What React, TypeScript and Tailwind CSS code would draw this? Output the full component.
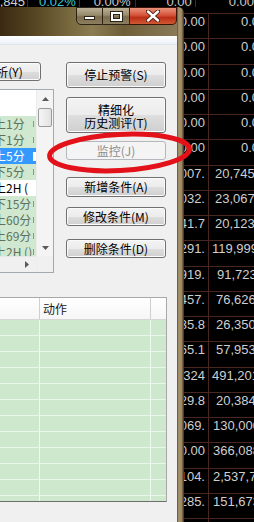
import React from 'react'

// right-hand quote grid: [col1, col2, col2 padding class]
const quoteRows: [string, string, string][] = [
  ['0.00', '0.00', 'pl-[32px]'],
  ['0.00', '0.00', 'pl-[32px]'],
  ['0.00', '0.00', 'pl-[32px]'],
  ['0.00', '0.00', 'pl-[32px]'],
  ['0.00', '0.00', 'pl-[32px]'],
  ['0.00', '0.00', 'pl-[32px]'],
  ['2007.', '20,745', 'pl-[6px]'],
  ['8032.', '23,067', 'pl-[6px]'],
  ['341.7', '20,123', 'pl-[6px]'],
  ['5291.', '119,999', 'pl-[3px]'],
  ['2919.', '91,723', 'pl-[8px]'],
  ['3457.', '76,626', 'pl-[7px]'],
  ['335.8', '26,350', 'pl-[7px]'],
  ['465.1', '57,953', 'pl-[7px]'],
  ['1,324', '491,201', 'pl-[3px]'],
  ['529.8', '20,384', 'pl-[7px]'],
  ['1069.', '130,000', 'pl-[4px]'],
  ['50.00', '366,088', 'pl-[4px]'],
  ['2104.', '2,537,7', 'pl-[4px]'],
  ['2285.', '151,673', 'pl-[4px]'],
  ['4701', '189,541', 'pl-[4px]'],
]

type ListRow = { text: string; kind: 'green' | 'sel' | 'plain' }

const listRows: ListRow[] = [
  { text: '上1分', kind: 'green' },
  { text: '下1分', kind: 'green' },
  { text: '上5分', kind: 'sel' },
  { text: '下5分', kind: 'green' },
  { text: '上2H (', kind: 'plain' },
  { text: '下15分', kind: 'green' },
  { text: '上60分', kind: 'green' },
  { text: '上69分', kind: 'green' },
  { text: '上2H ()', kind: 'green' },
]

const BTN =
  'flex items-center justify-center rounded-[3px] border border-[#707070] bg-[linear-gradient(#f3f3f3_0%,#ececec_50%,#dedede_51%,#cfcfcf_100%)] shadow-[inset_0_0_0_1px_#fbfbfb] text-[12px] leading-none text-black'

function Arrow({ dir }: { dir: 'up' | 'down' | 'right' }) {
  const pts = dir === 'up' ? '0,4 3.5,0 7,4' : dir === 'down' ? '0,0 3.5,4 7,0' : '0,0 4,3.5 0,7'
  const w = dir === 'right' ? 4 : 7
  const h = dir === 'right' ? 7 : 4
  return (
    <svg width={w} height={h} viewBox={`0 0 ${w} ${h}`}>
      <polygon points={pts} fill="#5a5a5a" />
    </svg>
  )
}

function TitleBar() {
  return (
    <div className="flex h-[29px] shrink-0 bg-[linear-gradient(90deg,#3a2a12_0%,#574622_20%,#7a6a40_40%,#8c7c52_52%,#6e5e38_70%,#8a7a58_100%)]">
      <div className="flex-1" />
      <div className="flex h-[18px]">
        <div className="flex w-[27px] items-end justify-center rounded-bl-[5px] border border-[#2c2414] bg-[linear-gradient(#bcb096,#978a6c_45%,#7a6c4c_55%,#8c7e60)] pb-[4px]">
          <span className="block h-[4px] w-[11px] border border-[#2a2214] bg-white" />
        </div>
        <div className="flex w-[27px] items-center justify-center border-y border-r border-[#2c2414] bg-[linear-gradient(#bcb096,#978a6c_45%,#7a6c4c_55%,#8c7e60)]">
          <span className="block h-[9px] w-[11px] border-2 border-white shadow-[0_0_0_1px_#2a2214,inset_0_0_0_1px_#2a2214]" />
        </div>
        <div className="flex w-[47px] items-center justify-center rounded-br-[5px] border-y border-r border-[#3a1408] bg-[linear-gradient(#e9927c,#d4553a_45%,#bb2e16_60%,#cf5a34)]">
          <svg width="14" height="12" viewBox="0 0 14 12">
            <path d="M2 1.5 L12 10.5 M12 1.5 L2 10.5" stroke="#4a1a10" strokeWidth="4.2" strokeLinecap="round" />
            <path d="M2 1.5 L12 10.5 M12 1.5 L2 10.5" stroke="#ffffff" strokeWidth="2.4" strokeLinecap="round" />
          </svg>
        </div>
      </div>
    </div>
  )
}

function ListBox() {
  return (
    <div className="mt-[8px] flex h-[184px] w-[54px] border-y border-r border-[#a3a9b1]">
      <div className="flex w-[36px] flex-col">
        <div className="flex flex-1 flex-col overflow-hidden bg-white">
          <div className="h-[26px] shrink-0" />
          {listRows.map((r, i) => (
            <div
              key={i}
              className={`relative flex h-[16px] shrink-0 items-center overflow-hidden whitespace-nowrap text-[12px] leading-none ${
                r.kind === 'sel'
                  ? 'bg-[#3399ff] text-white'
                  : r.kind === 'plain'
                  ? 'bg-white text-black'
                  : 'bg-[#cfe8cf] text-[#5f705f]'
              }`}
            >
              <span className="ml-[-6px]">{r.text}</span>
              {r.kind === 'sel' ? (
                <span className="absolute left-[33px] top-[4px] h-[9px] w-[3px] bg-white" />
              ) : r.kind === 'green' ? (
                <span className="absolute left-[33px] top-[5px] h-[6px] w-px bg-[#8a9a8a]" />
              ) : null}
            </div>
          ))}
        </div>
        <div className="flex h-[16px] shrink-0 justify-end border-t border-[#e6e6e6] bg-[#f0f0f0]">
          <div className="flex w-[17px] items-center justify-start pl-[6px]">
            <Arrow dir="right" />
          </div>
        </div>
      </div>
      <div className="flex w-[17px] flex-col border-l border-[#ececec] bg-[#f4f4f4]">
        <div className="flex h-[17px] items-center justify-center">
          <Arrow dir="up" />
        </div>
        <div className="mx-[1px] mt-[1px] h-[19px] rounded-[2px] border border-[#9a9a9a] bg-[linear-gradient(90deg,#f5f5f5,#e2e2e2)]" />
        <div className="flex-1" />
        <div className="flex h-[17px] items-center justify-center">
          <Arrow dir="down" />
        </div>
        <div className="h-[16px] bg-[#f0f0f0]" />
      </div>
    </div>
  )
}

function RightButtons() {
  return (
    <div className="ml-[12px] flex w-[100px] flex-col">
      <div className={`${BTN} h-[26px]`}>停止预警(S)</div>
      <div className={`${BTN} mt-[9px] h-[36px] flex-col pt-[2px]`}>
        <span className="block h-[13px] leading-[13px]">精细化</span>
        <span className="block h-[13px] leading-[13px]">历史测评(T)</span>
      </div>
      <div className="mt-[8px] flex h-[19px] items-center justify-center rounded-[3px] border border-[#b4b8bc] bg-[#f4f4f4] text-[12px] leading-none text-[#8d8d8d]">
        监控(J)
      </div>
      <div className={`${BTN} mt-[17px] h-[20px]`}>新增条件(A)</div>
      <div className={`${BTN} mt-[10px] h-[19px]`}>修改条件(M)</div>
      <div className={`${BTN} mt-[13px] h-[19px]`}>删除条件(D)</div>
    </div>
  )
}

function ConditionTable() {
  return (
    <div className="mt-[24px] ml-[-2px] w-[169px] border border-[#a8a8a8] border-b-[#6e6e6e]">
      <div className="flex h-[22px] border-b border-[#d6d6d6] bg-[linear-gradient(#ffffff,#f6f6f6)] text-[12px] leading-none text-[#1a1a1a]">
        <div className="w-[41px] border-r border-[#cfcfcf]" />
        <div className="flex w-[111px] items-center border-r border-[#cfcfcf] pl-[3px]">动作</div>
        <div className="flex-1" />
      </div>
      <div className="h-[181px] overflow-hidden bg-[#cde8cd]">
        {Array.from({ length: 12 }).map((_, i) => (
          <div key={i} className="flex h-[16px] border-b border-[#eaf6ea]">
            <div className="w-[41px] border-r border-[#eef8ee]" />
            <div className="w-[111px] border-r border-[#eef8ee]" />
            <div className="flex-1" />
          </div>
        ))}
      </div>
    </div>
  )
}

function Quotes() {
  return (
    <div className="flex flex-1 flex-col overflow-hidden bg-black font-['Liberation_Sans',sans-serif] text-[13px] text-[#cfcfcf]">
      <div className="h-[7px] shrink-0 border-b border-[#4a2620]" />
      {quoteRows.map(([a, b, pad], i) => (
        <div key={i} className="flex h-[25.26px] shrink-0 border-b border-[#4a2620] leading-[16px]">
          <div className="flex w-[25px] shrink-0 justify-end overflow-hidden whitespace-nowrap border-r border-[#4a2620] pr-[3px]">
            {a}
          </div>
          <div className={`flex-1 whitespace-nowrap ${pad}`}>{b}</div>
        </div>
      ))}
    </div>
  )
}

export default function App() {
  return (
    <div className="relative h-[522px] w-[254px] overflow-hidden bg-black font-['Noto_Sans_CJK_SC',sans-serif]">
      {/* strip of the quote board above the dialog */}
      <div className="flex h-[7px] overflow-hidden font-['Liberation_Sans',sans-serif] text-[13px] leading-[16px]">
        <div className="flex w-[28px] justify-end border-r border-[#4a2620] pr-[2px] text-[#d0d0d0]">
          <span className="mt-[-6px]">1,845</span>
        </div>
        <div className="flex w-[56px] justify-end border-r border-[#4a2620] pr-[3px] text-[#3cc6d4]">
          <span className="mt-[-6px]">0.02%</span>
        </div>
        <div className="flex w-[60px] justify-end border-r border-[#4a2620] pr-[4px] text-[#c8c8c8]">
          <span className="mt-[-6px]">0.00%</span>
        </div>
        <div className="flex w-[65px] justify-end border-r border-[#4a2620] pr-[3px] text-[#c8c8c8]">
          <span className="mt-[-6px]">0.00</span>
        </div>
        <div className="flex-1 pl-[33px] text-[#c8c8c8]">
          <span className="mt-[-6px] block">0.00</span>
        </div>
      </div>

      <div className="flex h-[515px]">
        {/* dialog window */}
        <div className="flex w-[184px] shrink-0">
          <div className="flex w-[177px] flex-col">
            <TitleBar />
            <div className="flex flex-1 flex-col bg-[#f0f0f0]">
              <div className="h-[9px] shrink-0 border-b border-[#e2e6ec] bg-[linear-gradient(#ffffff,#eaf0f8)]" />
              <div className="mt-[17px] flex">
                <div className="flex w-[54px] shrink-0 flex-col">
                  <div className={`${BTN} ml-[-58px] h-[19px] w-[99px] shrink-0`}>条件分析(Y)</div>
                  <ListBox />
                </div>
                <RightButtons />
              </div>
              <ConditionTable />
            </div>
          </div>
          <div className="w-[7px] rounded-tr-[6px] bg-[linear-gradient(90deg,#5c4c32_0%,#a8966f_25%,#9c8862_65%,#3a2a16_100%)]" />
        </div>
        <Quotes />
      </div>

      {/* red annotation ring */}
      <svg className="pointer-events-none absolute left-0 top-0" width="254" height="522" viewBox="0 0 254 522">
        <ellipse
          cx="119.5"
          cy="152.5"
          rx="70"
          ry="18"
          transform="rotate(-3 119.5 152.5)"
          fill="none"
          stroke="#e3121a"
          strokeWidth="5"
        />
      </svg>
    </div>
  )
}
